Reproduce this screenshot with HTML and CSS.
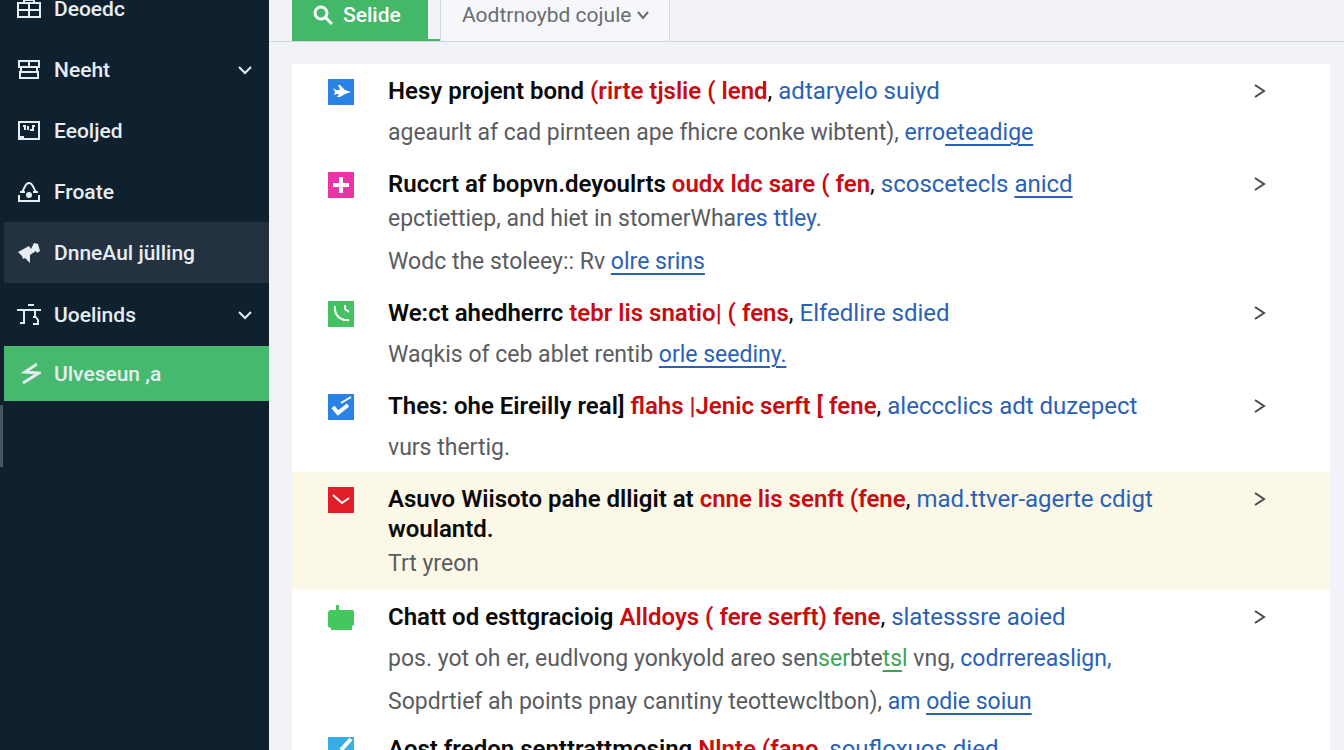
FILE: index.html
```html
<!DOCTYPE html>
<html lang="en">
  <head>
    <meta charset="UTF-8" />
    <meta name="viewport" content="width=device-width, initial-scale=1.0" />
    <title>Selide</title>
    <link rel="stylesheet" href="styles.css">
  </head>
  <body>
    <div class="app">
      <aside class="sidebar">
        <nav class="nav">
          <a href="#" class="nav-item">
            <svg class="nav-icon" viewBox="0 0 24 24"><path d="M1 6h22v14H1zM12 6v14M1 13h22M7 6V3h10v3M9 3V0h6v3"/></svg>
            <span>Deoedc</span>
          </a>
          <a href="#" class="nav-item">
            <svg class="nav-icon" viewBox="0 0 24 24"><path d="M2 3h20v6H2zM12 3v6M4 9v4M20 9v4M3 14h18v6H3z"/></svg>
            <span>Neeht</span>
            <svg class="nav-arrow" viewBox="0 0 16 16"><path d="M2 5l6 6 6-6"/></svg>
          </a>
          <a href="#" class="nav-item">
            <svg class="nav-icon" viewBox="0 0 24 24"><path d="M2 3h20v17H2zM2 18h5M6 7h2v4M11 7v4M13 11h3V7h2"/></svg>
            <span>Eeoljed</span>
          </a>
          <a href="#" class="nav-item">
            <svg class="nav-icon" viewBox="0 0 24 24"><path d="M3 12h5M16 12h5M5 12c3-4 3-9 7-9s4 5 7 9M2 15v6h20v-6"/><circle cx="12" cy="15" r="3" class="solid"/></svg>
            <span>Froate</span>
          </a>
          <a href="#" class="nav-item nav-item-hover">
            <svg class="nav-icon" viewBox="0 0 24 24"><path class="solid" d="M1 11L12 5l2 3 3-6 4 1 2 7-3 2-1-2-6 4v8l-5-5-2 1-1-3z"/></svg>
            <span>DnneAul jülling</span>
          </a>
          <a href="#" class="nav-item nav-item-group">
            <svg class="nav-icon" viewBox="0 0 24 24"><path d="M11 2h6M0 7h24M7 7v14M3 20h4M18 7v6l3 4v4h-5M16 14h2"/></svg>
            <span>Uoelinds</span>
            <svg class="nav-arrow" viewBox="0 0 16 16"><path d="M2 5l6 6 6-6"/></svg>
          </a>
          <a href="#" class="nav-item nav-item-active">
            <svg class="nav-icon" viewBox="0 0 24 24"><path class="bolt" d="M20 2L8 10l14 1L6 21"/></svg>
            <span>Ulveseun ,a</span>
          </a>
        </nav>
        <div class="sidebar-handle"></div>
      </aside>

      <main class="main">
        <header class="tabs">
          <div class="tab-slot">
            <button type="button" class="tab tab-primary">
              <svg class="tab-search" viewBox="0 0 20 20"><circle cx="8" cy="8" r="6"/><path d="M12 12l7 7"/></svg>
              Selide
            </button>
          </div>
          <button type="button" class="tab tab-menu">
            Aodtrnoybd cojule
            <svg class="tab-arrow" viewBox="0 0 12 12"><path d="M1 3l5 6 5-6"/></svg>
          </button>
        </header>

        <section class="list">
          <article class="row">
            <svg class="badge badge-blue" viewBox="0 0 26 26"><path class="solid" d="M5 9l3 2h4l-2-5h2l5 5 6 2-6 2-5 3h-3l2-3H9l-3 1 1-3z"/></svg>
            <div class="text">
              <h2>Hesy projent bond <em>(rirte tjslie ( lend</em><span class="comma">,</span> <a href="#">adtaryelo suiyd</a></h2>
              <p>ageaurlt af cad pirnteen ape fhicre conke wibtent), <a href="#">erro<u>eteadige</u></a></p>
            </div>
            <button type="button" class="open" aria-label="Open"><svg viewBox="0 0 16 16"><path d="M3 2l9 6-9 6"/></svg></button>
          </article>

          <article class="row row-tight">
            <svg class="badge badge-pink" viewBox="0 0 26 26"><path d="M13 5v16M5 13h16" stroke-width="4"/></svg>
            <div class="text">
              <h2>Ruccrt af bopvn.deyoulrts <em>oudx ldc sare ( fen</em><span class="comma">,</span> <a href="#">scoscetecls <u>anicd</u></a></h2>
              <p>epctiettiep, and hiet in stomerWha<a href="#">res ttley</a>.</p>
              <p>Wodc the stoleey:: Rv <a href="#"><u>olre srins</u></a></p>
            </div>
            <button type="button" class="open" aria-label="Open"><svg viewBox="0 0 16 16"><path d="M3 2l9 6-9 6"/></svg></button>
          </article>

          <article class="row">
            <svg class="badge badge-green" viewBox="0 0 26 26"><path d="M7 5c-1 9 5 15 14 14M17 4v4l4 3"/></svg>
            <div class="text">
              <h2>We:ct ahedherrc <em>tebr lis snatio| ( fens</em><span class="comma">,</span> <a href="#">Elfedlire sdied</a></h2>
              <p>Waqkis of ceb ablet rentib <a href="#"><u>orle seediny.</u></a></p>
            </div>
            <button type="button" class="open" aria-label="Open"><svg viewBox="0 0 16 16"><path d="M3 2l9 6-9 6"/></svg></button>
          </article>

          <article class="row">
            <svg class="badge badge-blue" viewBox="0 0 26 26"><path d="M5 13l5 6 10-8" stroke-width="4"/><path d="M13 9l10-6"/></svg>
            <div class="text">
              <h2>Thes: ohe Eireilly real] <em>flahs |Jenic serft [ fene</em><span class="comma">,</span> <a href="#">aleccclics adt duzepect</a></h2>
              <p>vurs thertig.</p>
            </div>
            <button type="button" class="open" aria-label="Open"><svg viewBox="0 0 16 16"><path d="M3 2l9 6-9 6"/></svg></button>
          </article>

          <article class="row row-tight row-marked">
            <svg class="badge badge-red" viewBox="0 0 26 26"><path d="M5 8l9 8 7-5"/></svg>
            <div class="text">
              <h2>Asuvo Wiisoto pahe dlligit at <em>cnne lis senft (fene</em><span class="comma">,</span> <a href="#">mad.ttver-agerte cdigt</a> woulantd.</h2>
              <p>Trt yreon</p>
            </div>
            <button type="button" class="open" aria-label="Open"><svg viewBox="0 0 16 16"><path d="M3 2l9 6-9 6"/></svg></button>
          </article>

          <article class="row">
            <svg class="badge" viewBox="0 0 26 26"><path class="robot" d="M8 0h3v5h14l1 2v13l-2 1v4H3v-2l-3-1V7l2-2h6z"/></svg>
            <div class="text">
              <h2>Chatt od esttgracioig <em>Alldoys ( fere serft) fene</em><span class="comma">,</span> <a href="#">slatesssre aoied</a></h2>
              <p>pos. yot oh er, eudlvong yonkyold areo sen<span class="ok">ser</span>bte<span class="ok"><u>ts</u>l</span> vng, <a href="#">codrrereaslign,</a></p>
              <p>Sopdrtief ah points pnay canıtiny teottewcltbon), <a href="#">am <u>odie soiun</u></a></p>
            </div>
            <button type="button" class="open" aria-label="Open"><svg viewBox="0 0 16 16"><path d="M3 2l9 6-9 6"/></svg></button>
          </article>

          <article class="row row-next">
            <svg class="badge badge-sky" viewBox="0 0 26 26"><path d="M13 13L23 2" stroke-width="4"/></svg>
            <div class="text">
              <h2>Aost fredon senttrattmosing <em>Nlnte (fano</em><span class="comma">,</span> <a href="#">soufloxuos died</a></h2>
            </div>
          </article>
        </section>
      </main>
    </div>
  </body>
</html>
```
FILE: styles.css
```css
* {
  box-sizing: border-box;
}

body {
  margin: 0;
  font-family: Roboto, 'Liberation Sans', sans-serif;
  background: #f1f3f9;
}

button {
  border: 0;
  padding: 0;
  background: none;
  font-family: inherit;
  cursor: pointer;
}

svg {
  display: block;
  flex: none;
  fill: none;
  stroke: currentColor;
  stroke-width: 2;
}

.solid {
  fill: currentColor;
  stroke: none;
}

.app {
  display: flex;
  height: 100vh;
  overflow: hidden;
}

/* Sidebar */
.sidebar {
  flex: none;
  width: 269px;
  background: #0f212e;
}

.nav {
  margin-top: -22px;
  padding-left: 4px;
}

.nav-item {
  display: flex;
  align-items: center;
  gap: 13px;
  height: 61px;
  padding: 0 16px 0 13px;
  color: #e6edf2;
  font-size: 21px;
  text-decoration: none;
}

.nav-item span {
  font-weight: 500;
}

.nav-item-hover {
  background: #233140;
}

.nav-item-group {
  margin: 1px 0;
}

.nav-item-active {
  height: 55px;
  background: #46b96e;
}

.nav-icon {
  width: 24px;
  height: 24px;
}

.bolt {
  stroke-width: 3;
}

.nav-arrow {
  width: 16px;
  height: 16px;
  margin-left: auto;
}

.sidebar-handle {
  width: 3px;
  height: 62px;
  margin-top: 4px;
  background: #465560;
}

/* Tabs */
.main {
  flex: 1;
  min-width: 0;
}

.tabs {
  display: flex;
  height: 42px;
  padding-left: 23px;
  border-bottom: 1px solid #d4d7de;
}

.tab-slot {
  padding-right: 12px;
  border-bottom: 2px solid #42b868;
}

.tab {
  display: flex;
  align-items: center;
  height: 100%;
  padding-bottom: 12px;
  font-size: 21px;
}

.tab-primary {
  gap: 10px;
  width: 136px;
  padding-left: 21px;
  padding-bottom: 10px;
  background: #42b868;
  color: #fff;
  font-weight: 500;
}

.tab-search {
  width: 20px;
  height: 20px;
  stroke-width: 3;
}

.tab-menu {
  gap: 6px;
  padding-left: 21px;
  padding-right: 20px;
  border: 1px solid #d4d7de;
  border-width: 0 1px;
  background: #f6f7fb;
  color: #6a6d72;
}

.tab-arrow {
  width: 12px;
  height: 12px;
}

/* List */
.list {
  margin: 22px 14px 0 23px;
  background: #fff;
}

.row {
  display: flex;
  align-items: flex-start;
  padding: 12px 62px 8px 36px;
}

.row-marked {
  padding-bottom: 10px;
  background: #fcf8e8;
}

.row-next {
  padding-top: 8px;
}

.text {
  flex: 1;
  padding: 0 66px 0 34px;
}

h2,
p {
  margin: 0;
  font-size: 23px;
}

h2 {
  color: #0a0a0a;
  font-size: 24px;
  line-height: 30px;
  font-weight: 600;
}

h2 em {
  color: #c80d12;
  font-style: normal;
}

h2 a,
.comma {
  font-weight: 400;
}

p {
  margin-top: 11px;
  color: #5a5c5f;
  line-height: 32px;
}

.row-tight h2 + p {
  margin-top: 4px;
}

.text a {
  color: #2a61b8;
  text-decoration: none;
}

u {
  text-decoration-thickness: 2px;
  text-underline-offset: 4px;
}

.ok {
  color: #3aa655;
}

.badge {
  width: 26px;
  height: 26px;
  margin-top: 3px;
  color: #fff;
}

.badge-blue {
  background: #2b82e6;
}

.badge-pink {
  background: #e935a5;
}

.badge-green {
  background: #45c162;
}

.badge-red {
  background: #e01f26;
}

.badge-sky {
  background: #38aee8;
}

.robot {
  fill: #45c75f;
  stroke: none;
}

.open {
  margin-top: 7px;
  color: #4a4a4a;
}

.open svg {
  width: 16px;
  height: 16px;
}
```
